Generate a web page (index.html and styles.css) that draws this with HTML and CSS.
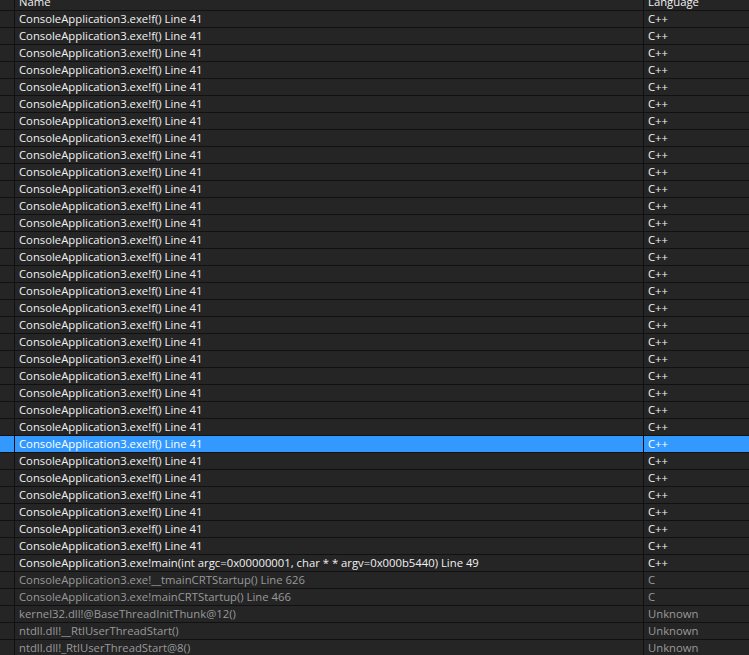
FILE: index.html
```html
<!DOCTYPE html>
<html>
<head>
<meta charset="utf-8">
<link rel="stylesheet" href="styles.css">
</head>
<body>
<div class="grid">
  <div class="row head"><div class="c g"></div><div class="c n">Name</div><div class="c l">Language</div></div>
  <div class="row"><div class="c g"></div><div class="c n">ConsoleApplication3.exe!f() Line 41</div><div class="c l">C++</div></div>
  <div class="row"><div class="c g"></div><div class="c n">ConsoleApplication3.exe!f() Line 41</div><div class="c l">C++</div></div>
  <div class="row"><div class="c g"></div><div class="c n">ConsoleApplication3.exe!f() Line 41</div><div class="c l">C++</div></div>
  <div class="row"><div class="c g"></div><div class="c n">ConsoleApplication3.exe!f() Line 41</div><div class="c l">C++</div></div>
  <div class="row"><div class="c g"></div><div class="c n">ConsoleApplication3.exe!f() Line 41</div><div class="c l">C++</div></div>
  <div class="row"><div class="c g"></div><div class="c n">ConsoleApplication3.exe!f() Line 41</div><div class="c l">C++</div></div>
  <div class="row"><div class="c g"></div><div class="c n">ConsoleApplication3.exe!f() Line 41</div><div class="c l">C++</div></div>
  <div class="row"><div class="c g"></div><div class="c n">ConsoleApplication3.exe!f() Line 41</div><div class="c l">C++</div></div>
  <div class="row"><div class="c g"></div><div class="c n">ConsoleApplication3.exe!f() Line 41</div><div class="c l">C++</div></div>
  <div class="row"><div class="c g"></div><div class="c n">ConsoleApplication3.exe!f() Line 41</div><div class="c l">C++</div></div>
  <div class="row"><div class="c g"></div><div class="c n">ConsoleApplication3.exe!f() Line 41</div><div class="c l">C++</div></div>
  <div class="row"><div class="c g"></div><div class="c n">ConsoleApplication3.exe!f() Line 41</div><div class="c l">C++</div></div>
  <div class="row"><div class="c g"></div><div class="c n">ConsoleApplication3.exe!f() Line 41</div><div class="c l">C++</div></div>
  <div class="row"><div class="c g"></div><div class="c n">ConsoleApplication3.exe!f() Line 41</div><div class="c l">C++</div></div>
  <div class="row"><div class="c g"></div><div class="c n">ConsoleApplication3.exe!f() Line 41</div><div class="c l">C++</div></div>
  <div class="row"><div class="c g"></div><div class="c n">ConsoleApplication3.exe!f() Line 41</div><div class="c l">C++</div></div>
  <div class="row"><div class="c g"></div><div class="c n">ConsoleApplication3.exe!f() Line 41</div><div class="c l">C++</div></div>
  <div class="row"><div class="c g"></div><div class="c n">ConsoleApplication3.exe!f() Line 41</div><div class="c l">C++</div></div>
  <div class="row"><div class="c g"></div><div class="c n">ConsoleApplication3.exe!f() Line 41</div><div class="c l">C++</div></div>
  <div class="row"><div class="c g"></div><div class="c n">ConsoleApplication3.exe!f() Line 41</div><div class="c l">C++</div></div>
  <div class="row"><div class="c g"></div><div class="c n">ConsoleApplication3.exe!f() Line 41</div><div class="c l">C++</div></div>
  <div class="row"><div class="c g"></div><div class="c n">ConsoleApplication3.exe!f() Line 41</div><div class="c l">C++</div></div>
  <div class="row"><div class="c g"></div><div class="c n">ConsoleApplication3.exe!f() Line 41</div><div class="c l">C++</div></div>
  <div class="row"><div class="c g"></div><div class="c n">ConsoleApplication3.exe!f() Line 41</div><div class="c l">C++</div></div>
  <div class="row"><div class="c g"></div><div class="c n">ConsoleApplication3.exe!f() Line 41</div><div class="c l">C++</div></div>
  <div class="row sel"><div class="c g"></div><div class="c n">ConsoleApplication3.exe!f() Line 41</div><div class="c l">C++</div></div>
  <div class="row"><div class="c g"></div><div class="c n">ConsoleApplication3.exe!f() Line 41</div><div class="c l">C++</div></div>
  <div class="row"><div class="c g"></div><div class="c n">ConsoleApplication3.exe!f() Line 41</div><div class="c l">C++</div></div>
  <div class="row"><div class="c g"></div><div class="c n">ConsoleApplication3.exe!f() Line 41</div><div class="c l">C++</div></div>
  <div class="row"><div class="c g"></div><div class="c n">ConsoleApplication3.exe!f() Line 41</div><div class="c l">C++</div></div>
  <div class="row"><div class="c g"></div><div class="c n">ConsoleApplication3.exe!f() Line 41</div><div class="c l">C++</div></div>
  <div class="row"><div class="c g"></div><div class="c n">ConsoleApplication3.exe!f() Line 41</div><div class="c l">C++</div></div>
  <div class="row"><div class="c g"></div><div class="c n">ConsoleApplication3.exe!main(int argc=0x00000001, char * * argv=0x000b5440) Line 49</div><div class="c l">C++</div></div>
  <div class="row ext"><div class="c g"></div><div class="c n">ConsoleApplication3.exe!__tmainCRTStartup() Line 626</div><div class="c l">C</div></div>
  <div class="row ext"><div class="c g"></div><div class="c n">ConsoleApplication3.exe!mainCRTStartup() Line 466</div><div class="c l">C</div></div>
  <div class="row ext"><div class="c g"></div><div class="c n">kernel32.dll!@BaseThreadInitThunk@12()</div><div class="c l">Unknown</div></div>
  <div class="row ext"><div class="c g"></div><div class="c n">ntdll.dll!__RtlUserThreadStart()</div><div class="c l">Unknown</div></div>
  <div class="row ext"><div class="c g"></div><div class="c n">ntdll.dll!_RtlUserThreadStart@8()</div><div class="c l">Unknown</div></div>
</div>
</body>
</html>
```
FILE: styles.css
```css
html, body {
  margin: 0;
  padding: 0;
  background: #252526;
  overflow: hidden;
}
body {
  font-family: "Open Sans", "Noto Sans", sans-serif;
  font-size: 11.3px;
  color: #f1f1f1;
}
.grid {
  margin-top: -6px;
}
.row {
  display: grid;
  grid-template-columns: 15px 629px 1fr;
  height: 16px;
  border-bottom: 1px solid #111111;
  background: #252526;
}
.c {
  border-right: 1px solid #111111;
  padding-left: 4px;
  line-height: 16px;
  white-space: nowrap;
  overflow: hidden;
}
.c.l {
  border-right: none;
}
.row.head {
  background: #252526;
}
.row.sel {
  background: #3399ff;
  color: #ffffff;
}
.row.ext {
  color: #999999;
}
```
